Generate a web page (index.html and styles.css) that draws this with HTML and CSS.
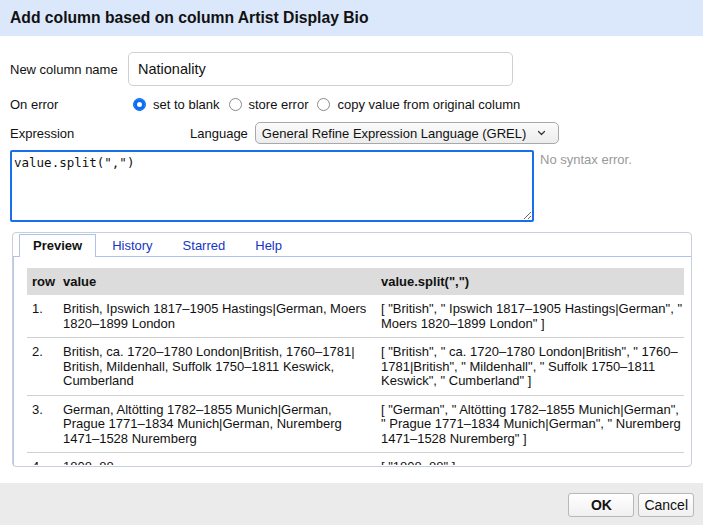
FILE: index.html
```html
<!DOCTYPE html>
<html lang="en">
<head>
    <meta charset="UTF-8">
    <meta name="viewport" content="width=device-width, initial-scale=1.0">
    <title>Add column</title>
    <link rel="stylesheet" href="styles.css">
</head>
<body>
    <div class="dialog">
        <div class="dialog-header">Add column based on column Artist Display Bio</div>

        <div class="dialog-body">
            <div class="field-row name-row">
                <label class="field-label" for="colName">New column name</label>
                <input class="text-input" id="colName" type="text" value="Nationality">
            </div>

            <div class="field-row error-row">
                <span class="field-label">On error</span>
                <label class="radio-option"><input type="radio" name="onError" checked>set to blank</label>
                <label class="radio-option"><input type="radio" name="onError">store error</label>
                <label class="radio-option"><input type="radio" name="onError">copy value from original column</label>
            </div>

            <div class="field-row expr-row">
                <span class="expr-label">Expression</span>
                <label class="lang-label" for="lang">Language</label>
                <div class="select-wrap">
                    <select id="lang" class="lang-select">
                        <option>General Refine Expression Language (GREL)</option>
                    </select>
                    <svg class="chevron" width="9" height="6" viewBox="0 0 9 6"><path d="M1.5 1.5 L4.5 4.5 L7.5 1.5" fill="none" stroke="#333" stroke-width="1.2" stroke-linecap="round" stroke-linejoin="round"/></svg>
                </div>
            </div>

            <div class="expr-editor">
                <textarea class="expr-input" spellcheck="false">value.split(",")</textarea>
                <div class="expr-status">No syntax error.</div>
            </div>

            <div class="tabs">
                <ul class="tab-list">
                    <li class="tab active">Preview</li>
                    <li class="tab">History</li>
                    <li class="tab">Starred</li>
                    <li class="tab">Help</li>
                </ul>
                <div class="tab-panel">
                    <div class="preview-scroll">
                        <table class="preview-table">
                            <colgroup>
                                <col class="col-row">
                                <col class="col-value">
                                <col class="col-result">
                            </colgroup>
                            <thead>
                                <tr><th>row</th><th>value</th><th>value.split(",")</th></tr>
                            </thead>
                            <tbody>
                                <tr>
                                    <td>1.</td>
                                    <td>British, Ipswich 1817–1905 Hastings|German, Moers 1820–1899 London</td>
                                    <td>[ "British", " Ipswich 1817–1905 Hastings|German", " Moers 1820–1899 London" ]</td>
                                </tr>
                                <tr>
                                    <td>2.</td>
                                    <td>British, ca. 1720–1780 London|British, 1760–1781|<wbr>British, Mildenhall, Suffolk 1750–1811 Keswick, Cumberland</td>
                                    <td>[ "British", " ca. 1720–1780 London|British", " 1760–1781|British", " Mildenhall", " Suffolk 1750–1811 Keswick", " Cumberland" ]</td>
                                </tr>
                                <tr>
                                    <td>3.</td>
                                    <td>German, Altötting 1782–1855 Munich|German, Prague 1771–1834 Munich|German, Nuremberg 1471–1528 Nuremberg</td>
                                    <td>[ "German", " Altötting 1782–1855 Munich|German", " Prague 1771–1834 Munich|German", " Nuremberg 1471–1528 Nuremberg" ]</td>
                                </tr>
                                <tr>
                                    <td>4.</td>
                                    <td>1808–88</td>
                                    <td>[ "1808–88" ]</td>
                                </tr>
                            </tbody>
                        </table>
                    </div>
                </div>
            </div>
        </div>

        <div class="dialog-footer">
            <button class="btn btn-ok">OK</button>
            <button class="btn">Cancel</button>
        </div>
    </div>
</body>
</html>
```

FILE: styles.css
```css
body {
    margin: 0;
    font-family: 'Liberation Sans', Arial, sans-serif;
    font-size: 13px;
    color: #111;
    background-color: #fff;
}
.dialog {
    width: 703px;
    height: 525px;
    display: flex;
    flex-direction: column;
}
.dialog-header {
    height: 36px;
    line-height: 35px;
    padding: 0 10px;
    background-color: #dbe7fa;
    font-size: 15.7px;
    font-weight: bold;
    color: #111;
}
.dialog-body {
    height: 447px;
    box-sizing: border-box;
    padding: 16px 10px 0;
}
.field-row {
    display: flex;
    align-items: center;
}
.field-label {
    width: 118px;
    flex-shrink: 0;
}
.name-row {
    height: 34px;
}
.text-input {
    width: 385px;
    height: 34px;
    box-sizing: border-box;
    padding: 0 9px;
    border: 1px solid #d0d0d0;
    border-radius: 5px;
    font-family: 'Liberation Sans', Arial, sans-serif;
    font-size: 14.5px;
    color: #111;
    outline: none;
}
.error-row {
    height: 20px;
    margin-top: 8px;
}
.radio-option {
    display: flex;
    align-items: center;
    margin-right: 9px;
}
.radio-option input {
    appearance: none;
    -webkit-appearance: none;
    width: 13px;
    height: 13px;
    margin: 0 7px 0 0;
    border: 1px solid #8a8a8a;
    border-radius: 50%;
    background-color: #fff;
    box-sizing: border-box;
}
.radio-option:first-of-type input {
    margin-left: 5px;
}
.radio-option input:checked {
    border-color: #0b6cf4;
    background-color: #0b6cf4;
    box-shadow: inset 0 0 0 3px #0b6cf4, inset 0 0 0 7px #fff;
}
.expr-row {
    height: 22px;
    margin-top: 8px;
}
.expr-label {
    width: 180px;
    flex-shrink: 0;
}
.lang-label {
    margin-right: 7px;
}
.select-wrap {
    position: relative;
}
.lang-select {
    appearance: none;
    -webkit-appearance: none;
    width: 304px;
    height: 22px;
    padding: 0 0 0 6px;
    border: 1px solid #a8a8a8;
    border-radius: 5px;
    background: linear-gradient(#fbfbfb, #ececec);
    font-family: 'Liberation Sans', Arial, sans-serif;
    font-size: 13px;
    color: #111;
}
.chevron {
    position: absolute;
    right: 13px;
    top: 8px;
    pointer-events: none;
}
.expr-editor {
    display: flex;
    margin-top: 6px;
}
.expr-input {
    width: 524px;
    height: 72px;
    box-sizing: border-box;
    padding: 3px 2px;
    margin: 0;
    border: 2px solid #1a6fe8;
    border-radius: 2px;
    font-family: 'DejaVu Sans Mono', monospace;
    font-size: 12.5px;
    line-height: 16px;
    color: #111;
    outline: none;
    resize: both;
}
.expr-status {
    margin-left: 6px;
    padding-top: 2px;
    color: #999;
}
.tabs {
    width: 680px;
    margin: 10px 0 0 2px;
    box-sizing: border-box;
    border: 1px solid #c9cfdb;
    border-radius: 4px;
}
.tab-list {
    display: flex;
    gap: 2px;
    list-style: none;
    margin: 0;
    padding: 1px 0 0 6px;
}
.tab {
    height: 22px;
    line-height: 21px;
    box-sizing: border-box;
    padding: 0 13px;
    border: 1px solid transparent;
    border-bottom: none;
    color: #1535c8;
    font-size: 13px;
}
.tab.active {
    border-color: #aec3ec;
    background-color: #fff;
    color: #111;
    font-weight: bold;
    margin-bottom: -1px;
    height: 23px;
    position: relative;
}
.tab-panel {
    border-top: 1px solid #aec3ec;
    border-left: 1px solid #b8caec;
    padding: 11px 7px 1px 13px;
}
.preview-scroll {
    height: 197px;
    overflow: hidden;
}
.preview-table {
    width: 658px;
    border-collapse: collapse;
    table-layout: fixed;
}
.col-row {
    width: 31px;
}
.col-value {
    width: 318px;
}
.col-result {
    width: 309px;
}
.preview-table th {
    background-color: #dcdcdc;
    text-align: left;
    font-weight: bold;
    padding: 6px 5px;
    line-height: 15px;
}
.preview-table td {
    padding: 7px 2px 6px 5px;
    line-height: 14.5px;
    vertical-align: top;
    border-bottom: 1px solid #d0d0d0;
    color: #111;
}
.dialog-footer {
    height: 42px;
    box-sizing: border-box;
    padding: 10px 9px 0 0;
    background-color: #ebebeb;
    display: flex;
    justify-content: flex-end;
    align-items: flex-start;
    gap: 4px;
}
.btn {
    height: 24px;
    padding: 0 5px;
    border: 1px solid #b8b8b8;
    border-radius: 3px;
    background: linear-gradient(#ffffff, #f0f0f0);
    font-family: 'Liberation Sans', Arial, sans-serif;
    font-size: 14px;
    color: #111;
}
.btn-ok {
    width: 66px;
    font-weight: bold;
}
```
